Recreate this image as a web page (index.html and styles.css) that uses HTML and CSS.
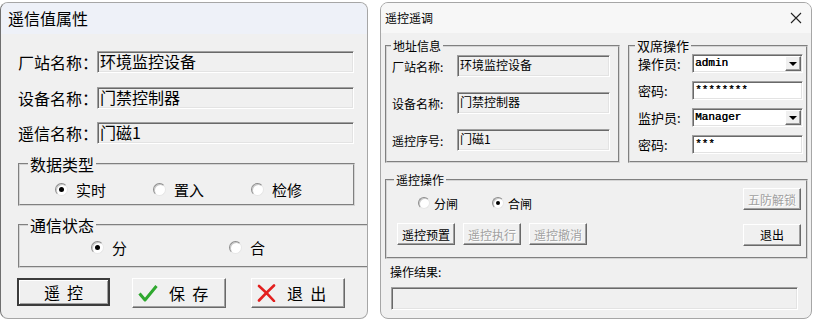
FILE: index.html
```html
<!DOCTYPE html>
<html lang="zh-CN">
<head>
<meta charset="utf-8">
<title>遥信值属性 / 遥控遥调</title>
<link rel="stylesheet" href="styles.css">
</head>
<body>
<div class="screen">
  <section class="dlg dlg-a">
    <header class="tb-a">遥信值属性</header>
    <div class="body-a">
      <div class="row-a"><span class="lbl-a">厂站名称：</span><div class="field-a">环境监控设备</div></div>
      <div class="row-a"><span class="lbl-a">设备名称：</span><div class="field-a">门禁控制器</div></div>
      <div class="row-a"><span class="lbl-a">遥信名称：</span><div class="field-a">门磁1</div></div>

      <fieldset class="grp-a g1">
        <legend>数据类型</legend>
        <div class="radios-a r3">
          <label class="opt"><span class="radio on"></span><span>实时</span></label>
          <label class="opt"><span class="radio"></span><span>置入</span></label>
          <label class="opt"><span class="radio"></span><span>检修</span></label>
        </div>
      </fieldset>

      <fieldset class="grp-a g2">
        <legend>通信状态</legend>
        <div class="radios-a r2">
          <label class="opt"><span class="radio on"></span><span>分</span></label>
          <label class="opt"><span class="radio"></span><span>合</span></label>
        </div>
      </fieldset>

      <div class="btns-a">
        <button class="btn-a def">遥&nbsp;&nbsp;控</button>
        <button class="btn-a save">
          <svg class="ico" viewBox="0 0 20 18" width="20" height="18"><path d="M1.5 9.5 L7 16 L18.5 2" fill="none" stroke="#2fa82f" stroke-width="3" stroke-linejoin="round"/></svg>
          <span>保&nbsp;&nbsp;存</span>
        </button>
        <button class="btn-a quit">
          <svg class="ico" viewBox="0 0 20 18" width="20" height="18"><path d="M2 2 Q9 8 17 17 M17 1.5 Q9 9 2 16.5" fill="none" stroke="#e3201f" stroke-width="2.6" stroke-linecap="round"/></svg>
          <span>退&nbsp;&nbsp;出</span>
        </button>
      </div>
    </div>
  </section>

  <section class="dlg dlg-b">
    <header class="tb-b">
      <span>遥控遥调</span>
      <svg class="close" viewBox="0 0 12 12" width="12" height="12"><path d="M1 1 L11 11 M11 1 L1 11" stroke="#222" stroke-width="1.1" fill="none"/></svg>
    </header>
    <div class="body-b">
      <div class="top-b">
        <fieldset class="grp-b addr">
          <legend>地址信息</legend>
          <div class="row-b"><span class="lbl-b">厂站名称:</span><div class="field-b">环境监控设备</div></div>
          <div class="row-b"><span class="lbl-b">设备名称:</span><div class="field-b">门禁控制器</div></div>
          <div class="row-b"><span class="lbl-b">遥控序号:</span><div class="field-b">门磁1</div></div>
        </fieldset>
        <fieldset class="grp-b dual">
          <legend>双席操作</legend>
          <div class="row-c"><span class="lbl-c">操作员:</span><div class="combo"><span class="mono">admin</span><span class="drop"><i></i></span></div></div>
          <div class="row-c"><span class="lbl-c">密码:</span><div class="pwd"><span class="mono">********</span></div></div>
          <div class="row-c"><span class="lbl-c">监护员:</span><div class="combo"><span class="mono">Manager</span><span class="drop"><i></i></span></div></div>
          <div class="row-c"><span class="lbl-c">密码:</span><div class="pwd"><span class="mono">***</span></div></div>
        </fieldset>
      </div>

      <fieldset class="grp-b ctl">
        <legend>遥控操作</legend>
        <div class="ctl-grid">
          <div class="radios-b">
            <label class="opt-b"><span class="radio sm"></span><span>分闸</span></label>
            <label class="opt-b"><span class="radio sm on"></span><span>合闸</span></label>
          </div>
          <button class="btn-b dis">五防解锁</button>
          <div class="ops-b">
            <button class="btn-b">遥控预置</button>
            <button class="btn-b dis">遥控执行</button>
            <button class="btn-b dis">遥控撤消</button>
          </div>
          <button class="btn-b quit-b">退出</button>
        </div>
      </fieldset>

      <div class="res-lbl">操作结果:</div>
      <div class="res-box"></div>
    </div>
  </section>
</div>
</body>
</html>
```

FILE: styles.css
```css
* { box-sizing: border-box; }
html, body { margin: 0; padding: 0; }
body {
  width: 814px;
  height: 319px;
  overflow: hidden;
  background: #ffffff;
  font-family: "Noto Sans CJK SC", "Noto Sans", sans-serif;
  color: #000;
}
.screen {
  display: flex;
  gap: 12px;
  padding-top: 2px;
  height: 319px;
}
.dlg {
  background: #f0f0f0;
  border: 1px solid #a6a6a6;
  border-radius: 8px;
  height: 317px;
  display: flex;
  flex-direction: column;
  overflow: hidden;
}
.dlg-a { width: 368px; border-left-color: #6f6f6f; }
.dlg-b { width: 432px; }

/* ---------- left dialog ---------- */
.tb-a {
  height: 31px;
  background: #eef1f8;
  font-size: 16px;
  line-height: 31px;
  padding-left: 7px;
}
.body-a {
  padding: 17px 13px 0 17px;
  display: flex;
  flex-direction: column;
}
.row-a {
  display: flex;
  align-items: center;
  height: 22px;
}
.row-a + .row-a { margin-top: 14px; }
.row-a:nth-child(3) { margin-top: 13px; }
.lbl-a {
  width: 79px;
  font-size: 16px;
  white-space: nowrap;
}
.field-a {
  width: 257px;
  height: 22px;
  background: #f0f0f0;
  border-style: solid;
  border-width: 1px;
  border-color: #a0a0a0 #ffffff #ffffff #a0a0a0;
  box-shadow: inset 1px 1px 0 #696969, inset -1px -1px 0 #e3e3e3;
  font-size: 16px;
  line-height: 19px;
  padding-left: 2px;
  white-space: nowrap;
}

.grp-a {
  margin: 0;
  padding: 0;
  border: 2px groove #d4d4d4;
  width: 337px;
}
.grp-a legend {
  font-size: 16px;
  line-height: 20px;
  padding: 0 2px;
  margin-left: 8px;
}
.g1 { margin-top: 10px; height: 52px; }
.g2 { margin-top: 9px; height: 53px; }

.radios-a {
  display: flex;
  height: 20px;
  align-items: center;
}
.r3 { margin-top: 5px; padding-left: 35px; }
.r3 .opt { width: 98px; }
.r2 { margin-top: 2px; padding-left: 71px; }
.r2 .opt { width: 138px; }
.opt {
  display: flex;
  align-items: center;
  gap: 8px;
  font-size: 15px;
}
.radio {
  width: 13px;
  height: 13px;
  flex: none;
  border-radius: 50%;
  background: #ffffff;
  border: 1px solid;
  border-color: #8c8c8c #e6e6e6 #e6e6e6 #8c8c8c;
  box-shadow: inset 1px 1px 0 #c8c8c8;
  position: relative;
}
.radio.on::after {
  content: "";
  position: absolute;
  left: 3px;
  top: 3px;
  width: 5px;
  height: 5px;
  border-radius: 50%;
  background: #000;
}
.radio.sm { width: 12px; height: 12px; }
.radio.sm.on::after { left: 3px; top: 3px; width: 4px; height: 4px; }

.btns-a {
  display: flex;
  margin-top: 10px;
  margin-left: -1px;
  align-items: flex-start;
}
.btn-a {
  font-family: inherit;
  font-size: 16px;
  height: 30px;
  width: 94px;
  background: #f0f0f0;
  border: 1px solid;
  border-color: #ffffff #696969 #696969 #ffffff;
  box-shadow: inset -1px -1px 0 #a0a0a0;
  padding: 0;
  display: flex;
  align-items: center;
  justify-content: center;
  color: #000;
}
.btn-a.def {
  width: 93px;
  height: 28px;
  border: 2px solid #3c3c3c;
  box-shadow: inset 1px 1px 0 #ffffff, inset -1px -1px 0 #a0a0a0;
}
.btn-a.save { margin-left: 22px; justify-content: flex-start; padding-left: 5px; }
.btn-a.quit { margin-left: 25px; justify-content: flex-start; padding-left: 5px; }
.btn-a .ico { flex: none; }
.btn-a.save span { margin-left: 11px; }
.btn-a.quit span { margin-left: 10px; }

/* ---------- right dialog ---------- */
.tb-b {
  height: 30px;
  background: #f7f7f7;
  font-size: 12px;
  line-height: 30px;
  padding-left: 4px;
  display: flex;
  justify-content: space-between;
  align-items: center;
}
.close { margin-right: 9px; }
.body-b {
  padding: 6px 3px 0 4px;
  display: flex;
  flex-direction: column;
  font-size: 12px;
}
.top-b {
  display: flex;
  gap: 8px;
}
.grp-b {
  margin: 0;
  padding: 0;
  border: 2px groove #d4d4d4;
}
.grp-b legend {
  font-size: 12px;
  line-height: 14px;
  padding: 0 2px;
}
.addr {
  width: 235px;
  height: 124px;
  padding: 2px 0 0 5px;
}
.addr legend { margin-left: -1px; }
.row-b {
  display: flex;
  align-items: center;
  height: 22px;
}
.row-b + .row-b { margin-top: 15px; }
.lbl-b { width: 65px; white-space: nowrap; }
.field-b {
  width: 153px;
  height: 22px;
  background: #f0f0f0;
  border-style: solid;
  border-width: 1px;
  border-color: #a0a0a0 #ffffff #ffffff #a0a0a0;
  box-shadow: inset 1px 1px 0 #696969, inset -1px -1px 0 #e3e3e3;
  line-height: 18px;
  padding-left: 2px;
  white-space: nowrap;
}

.dual {
  width: 180px;
  height: 124px;
  padding: 1px 0 0 8px;
}
.dual legend { margin-left: -3px; font-size: 13px; }
.row-c {
  display: flex;
  align-items: center;
  height: 19px;
}
.row-c + .row-c { margin-top: 8px; }
.lbl-c { width: 54px; font-size: 13px; white-space: nowrap; }
.combo, .pwd {
  width: 111px;
  height: 19px;
  background: #ffffff;
  border-style: solid;
  border-width: 1px;
  border-color: #a0a0a0 #ffffff #ffffff #a0a0a0;
  box-shadow: inset 1px 1px 0 #696969, inset -1px -1px 0 #e3e3e3;
  display: flex;
  align-items: center;
  padding-left: 2px;
}
.mono {
  font-family: "Liberation Mono", "DejaVu Sans Mono", monospace;
  font-size: 11px;
  font-weight: normal;
  flex: 1;
  line-height: 15px;
  text-shadow: 0.4px 0 0 #000;
}
.drop {
  flex: none;
  width: 16px;
  height: 15px;
  margin-right: 1px;
  background: #f0f0f0;
  border: 1px solid;
  border-color: #ffffff #696969 #696969 #ffffff;
  box-shadow: inset -1px -1px 0 #a0a0a0;
  display: flex;
  align-items: center;
  justify-content: center;
}
.drop i {
  width: 0;
  height: 0;
  border-left: 4px solid transparent;
  border-right: 4px solid transparent;
  border-top: 4px solid #000;
}

.ctl {
  margin-top: 10px;
  width: 423px;
  height: 86px;
  padding: 1px 4px 0 10px;
}
.ctl legend { margin-left: -3px; }
.ctl-grid {
  display: grid;
  grid-template-columns: 1fr 59px;
  grid-template-rows: 22px 22px;
  row-gap: 13px;
  align-items: center;
}
.radios-b {
  display: flex;
  align-items: center;
  padding-left: 21px;
  margin-top: 8px;
}
.opt-b {
  display: flex;
  align-items: center;
  gap: 4px;
  width: 74px;
}
.ops-b {
  display: flex;
  gap: 8px;
}
.btn-b {
  font-family: inherit;
  font-size: 12px;
  height: 22px;
  width: 58px;
  padding: 0;
  background: #f0f0f0;
  color: #000;
  border: 1px solid;
  border-color: #ffffff #696969 #696969 #ffffff;
  box-shadow: inset -1px -1px 0 #a0a0a0;
}
.btn-b.dis {
  color: #a0a0a0;
  text-shadow: 1px 1px 0 #ffffff;
}
.quit-b { margin-top: 1px; }

.res-lbl {
  margin-top: 6px;
  margin-left: 5px;
  line-height: 14px;
  font-size: 12px;
}
.res-box {
  margin-top: 8px;
  margin-left: 6px;
  width: 407px;
  height: 23px;
  background: #f0f0f0;
  border-style: solid;
  border-width: 1px;
  border-color: #a0a0a0 #ffffff #ffffff #a0a0a0;
  box-shadow: inset 1px 1px 0 #696969, inset -1px -1px 0 #e3e3e3;
}
```
